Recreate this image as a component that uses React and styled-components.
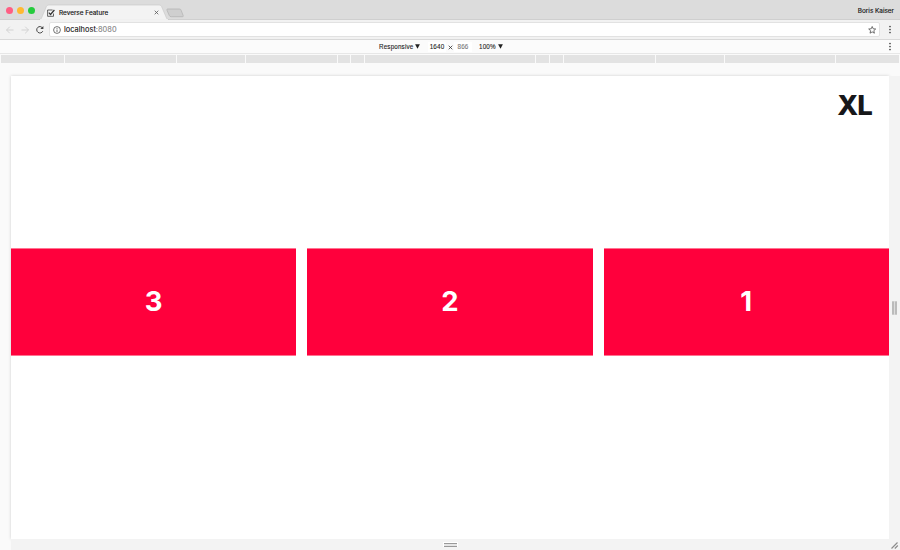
import React from 'react';
import styled, { createGlobalStyle } from 'styled-components';

const GlobalStyle = createGlobalStyle`
  * { box-sizing: border-box; }
  html, body { margin: 0; padding: 0; overflow: hidden; }
  body { font-family: Inter, "Liberation Sans", sans-serif; }
  svg { display: block; flex: none; }
`;

const Browser = styled.div`
  width: 900px;
  height: 550px;
  display: flex;
  flex-direction: column;
  background: #fafafa;
  overflow: hidden;
`;

const TabStrip = styled.header`
  height: 20px;
  flex: none;
  display: flex;
  background: #dcdcdc;
  border-bottom: 1px solid #cfcfcf;
`;

const Lights = styled.div`
  display: flex;
  gap: 4px;
  padding: 7px 0 0 6px;
  width: 39px;
`;

const Light = styled.span`
  width: 7px;
  height: 7px;
  flex: none;
  border-radius: 50%;
  background: ${({ $color }) => $color};
`;

const Tab = styled.div`
  width: 130px;
  height: 20px;
  flex: none;
  display: grid;
  > * { grid-area: 1 / 1; }
`;

const TabContent = styled.div`
  display: flex;
  align-items: center;
  padding: 5px 10px 0 8px;
`;

const TabTitle = styled.span`
  flex: 1;
  margin: 1px 0 0 4px;
  font-size: 6.4px;
  line-height: 9px;
  letter-spacing: 0.03px;
  color: #111;
  -webkit-text-stroke: 0.15px #111;
`;

const NewTab = styled.div`
  margin: 8px 0 0 -4px;
`;

const Profile = styled.span`
  margin: 7px 6px 0 auto;
  font-size: 6.4px;
  line-height: 9px;
  color: #111;
  -webkit-text-stroke: 0.15px #111;
`;

const Toolbar = styled.div`
  height: 20px;
  flex: none;
  display: flex;
  align-items: center;
  padding: 0 8px 0 5px;
  background: #f2f2f2;
  border-bottom: 1px solid #d9d9d9;
`;

const NavButtons = styled.div`
  width: 44px;
  flex: none;
  display: flex;
  gap: 5px;
`;

const AddressBar = styled.div`
  flex: 1;
  height: 15px;
  display: flex;
  align-items: center;
  padding: 0 3px;
  background: #fff;
  border: 1px solid #e2e2e2;
  border-radius: 2px;
`;

const Address = styled.span`
  flex: 1;
  margin: 1px 0 0 3px;
  font-size: 7.4px;
  line-height: 10px;
  letter-spacing: 0.03px;
  color: #111;
  -webkit-text-stroke: 0.1px currentColor;
`;

const Port = styled.span`
  color: #858585;
`;

const MenuSlot = styled.div`
  width: 4px;
  margin-left: ${({ $gap }) => $gap};
`;

const DeviceBar = styled.div`
  height: 14px;
  flex: none;
  display: flex;
  align-items: center;
  padding: 0 8px 0 379px;
  border-bottom: 1px solid #e7e7e7;
  font: 6.3px/9px "Liberation Sans", Arial, sans-serif;
  color: #222;
  -webkit-text-stroke: 0.1px currentColor;
  background: #fbfbfb;
`;

const Dropdown = styled.span`
  display: flex;
  align-items: center;
  gap: 2px;
  width: ${({ $width }) => $width};
  letter-spacing: 0.15px;
`;

const Dimension = styled.span`
  width: 18px;
  height: 10px;
  text-align: center;
  background: #fff;
  letter-spacing: 0.15px;
  color: ${({ $muted }) => ($muted ? '#777' : '#222')};
`;

const Times = styled.span`
  width: 8px;
  padding-top: 1px;
  display: flex;
  justify-content: center;
`;

const Ruler = styled.div`
  height: 10px;
  flex: none;
  display: grid;
  grid-template-columns: 63px 111px 68px 91px 12px 13px 170px 13px 13px 91px 68px 110px 1fr;
  column-gap: 1px;
  padding: 1px 1px 1px;
  background: #fafafa;
`;

const Band = styled.span`
  background: #e3e3e3;
`;

const Stage = styled.main`
  flex: 1;
  display: grid;
  grid-template: 463px 11px / 878px 11px;
  padding: 12px 0 0 11px;
`;

const Page = styled.section`
  display: flex;
  flex-direction: column;
  background: #fff;
  box-shadow: 0 0 3px rgba(0, 0, 0, 0.18);
`;

const Size = styled.div`
  height: 172px;
  padding: 13px 17px 0 0;
  text-align: right;
  font-size: 27.5px;
  line-height: 32px;
  font-weight: 800;
  letter-spacing: -0.9px;
  color: #171719;
`;

const Blocks = styled.div`
  height: 108px;
  display: grid;
  grid-template-columns: repeat(3, 1fr);
  column-gap: 10.8px;
`;

const Block = styled.div`
  display: flex;
  align-items: center;
  justify-content: center;
  padding-bottom: 2px;
  background: #ff003c;
  border: solid #ff7391;
  border-width: 1px 0;
  color: #fff;
  font-size: 27.5px;
  line-height: 34px;
  font-weight: 700;
`;

const Grip = styled.div`
  display: flex;
  align-items: center;
  justify-content: center;
  background: #f3f3f3;
`;

const Corner = styled(Grip)`
  align-items: flex-end;
  justify-content: flex-end;
`;

const Dots = () => (
  <svg width="4" height="9" viewBox="0 0 4 9" fill="#444">
    <circle cx="2" cy="1.5" r=".85" /><circle cx="2" cy="4.5" r=".85" /><circle cx="2" cy="7.5" r=".85" />
  </svg>
);

const Caret = () => (
  <svg width="5" height="5" viewBox="0 0 5 5"><path d="M.1.3h4.8L2.5 4.8z" fill="#222" /></svg>
);

const Arrow = ({ flip }) => (
  <svg width="10" height="10" viewBox="0 0 10 10" fill="none" stroke="#cecece" strokeWidth=".9">
    <path d={flip ? 'M1.5 5h7M5.2 1.7 8.5 5 5.2 8.3' : 'M8.5 5h-7M4.8 1.7 1.5 5l3.3 3.3'} />
  </svg>
);

const sections = Array.from({ length: 13 }, (_, i) => i);

export default function App() {
  return (
    <>
      <GlobalStyle />
      <Browser>
        <TabStrip>
          <Lights>
            <Light $color="#ff5e83" /><Light $color="#ffb931" /><Light $color="#25cb3d" />
          </Lights>
          <Tab>
            <svg width="130" height="20" viewBox="0 0 130 20">
              <path d="M0 20c1.5-.2 2-1 2.5-2L7 7.5c.6-1.7 1.2-2.5 3-2.5h110c1.8 0 2.4.8 3 2.5l4.5 10.5c.5 1 1 1.8 2.5 2z" fill="#f3f3f3" stroke="#c6c6c6" strokeWidth=".6" />
              <path d="M1 19.7h128" stroke="#f3f3f3" />
            </svg>
            <TabContent>
              <svg width="8" height="8" viewBox="0 0 8 8" fill="none" stroke="#333">
                <path d="M6.5 4.5v2.8H.6V1h5" strokeWidth=".75" /><path d="m1.8 3.7 1.7 1.8L7.4 1" strokeWidth="1.2" />
              </svg>
              <TabTitle>Reverse Feature</TabTitle>
              <svg width="5" height="5" viewBox="0 0 5 5"><path d="m.7.7 3.6 3.6M4.3.7.7 4.3" stroke="#555" strokeWidth=".8" /></svg>
            </TabContent>
          </Tab>
          <NewTab>
            <svg width="20" height="10" viewBox="0 0 20 10">
              <path d="M2.8 1h11.5c1 0 1.4.3 1.8 1.2l2 5.2c.4.9.2 1.3-.8 1.3H6.2c-1 0-1.5-.3-1.9-1.2L2 2.3C1.7 1.5 1.9 1 2.8 1z" fill="#cfcfcf" stroke="#b0b0b0" strokeWidth=".7" />
            </svg>
          </NewTab>
          <Profile>Boris Kaiser</Profile>
        </TabStrip>
        <Toolbar>
          <NavButtons>
            <Arrow /><Arrow flip />
            <svg width="10" height="10" viewBox="0 0 10 10" fill="none" stroke="#444">
              <path d="M7.6 3A3.2 3.2 0 1 0 7.8 6.2" strokeWidth="1" /><path d="M8.4 1v3H5.3z" fill="#444" stroke="none" />
            </svg>
          </NavButtons>
          <AddressBar>
            <svg width="8" height="8" viewBox="0 0 8 8" fill="none" stroke="#444" strokeWidth=".75">
              <circle cx="4" cy="4" r="3.4" /><path d="M4 3.5V6M4 2v.9" />
            </svg>
            <Address>localhost<Port>:8080</Port></Address>
            <svg width="8" height="8" viewBox="0 0 8 8"><path d="m4.2.5 1 2.3 2.5.2-1.9 1.7.6 2.5-2.2-1.3L2 7.2l.6-2.5L.7 3l2.5-.2z" fill="none" stroke="#444" strokeWidth=".75" /></svg>
          </AddressBar>
          <MenuSlot $gap="8px"><Dots /></MenuSlot>
        </Toolbar>
        <DeviceBar>
          <Dropdown $width="49px">Responsive <Caret /></Dropdown>
          <Dimension>1640</Dimension>
          <Times><svg width="5" height="5" viewBox="0 0 5 5"><path d="m.7.7 3.6 3.6M4.3.7.7 4.3" stroke="#333" strokeWidth=".8" /></svg></Times>
          <Dimension $muted>866</Dimension>
          <MenuSlot $gap="3px" />
          <Dropdown $width="30px">100% <Caret /></Dropdown>
          <MenuSlot $gap="auto"><Dots /></MenuSlot>
        </DeviceBar>
        <Ruler>{sections.map((n) => <Band key={n} />)}</Ruler>
        <Stage>
          <Page>
            <Size>XL</Size>
            <Blocks><Block>3</Block><Block>2</Block><Block>1</Block></Blocks>
          </Page>
          <Grip>
            <svg width="5" height="14" viewBox="0 0 5 14"><path d="M0 0h5v14H0z" fill="#ddd" /><path d="M1 .5v13M4 .5v13" stroke="#999" /></svg>
          </Grip>
          <Grip>
            <svg width="15" height="5" viewBox="0 0 15 5"><path d="M0 0h15v5H0z" fill="#fff" /><path d="M1 1.5h13M1 4.5h13" stroke="#999" /><path d="M1 3h13" stroke="#ccc" /></svg>
          </Grip>
          <Corner>
            <svg width="10" height="9" viewBox="0 0 10 9"><path d="m1.5 7.5 6-6M4.8 7.5l3-3" stroke="#8c8c8c" strokeWidth="1.2" /></svg>
          </Corner>
        </Stage>
      </Browser>
    </>
  );
}
